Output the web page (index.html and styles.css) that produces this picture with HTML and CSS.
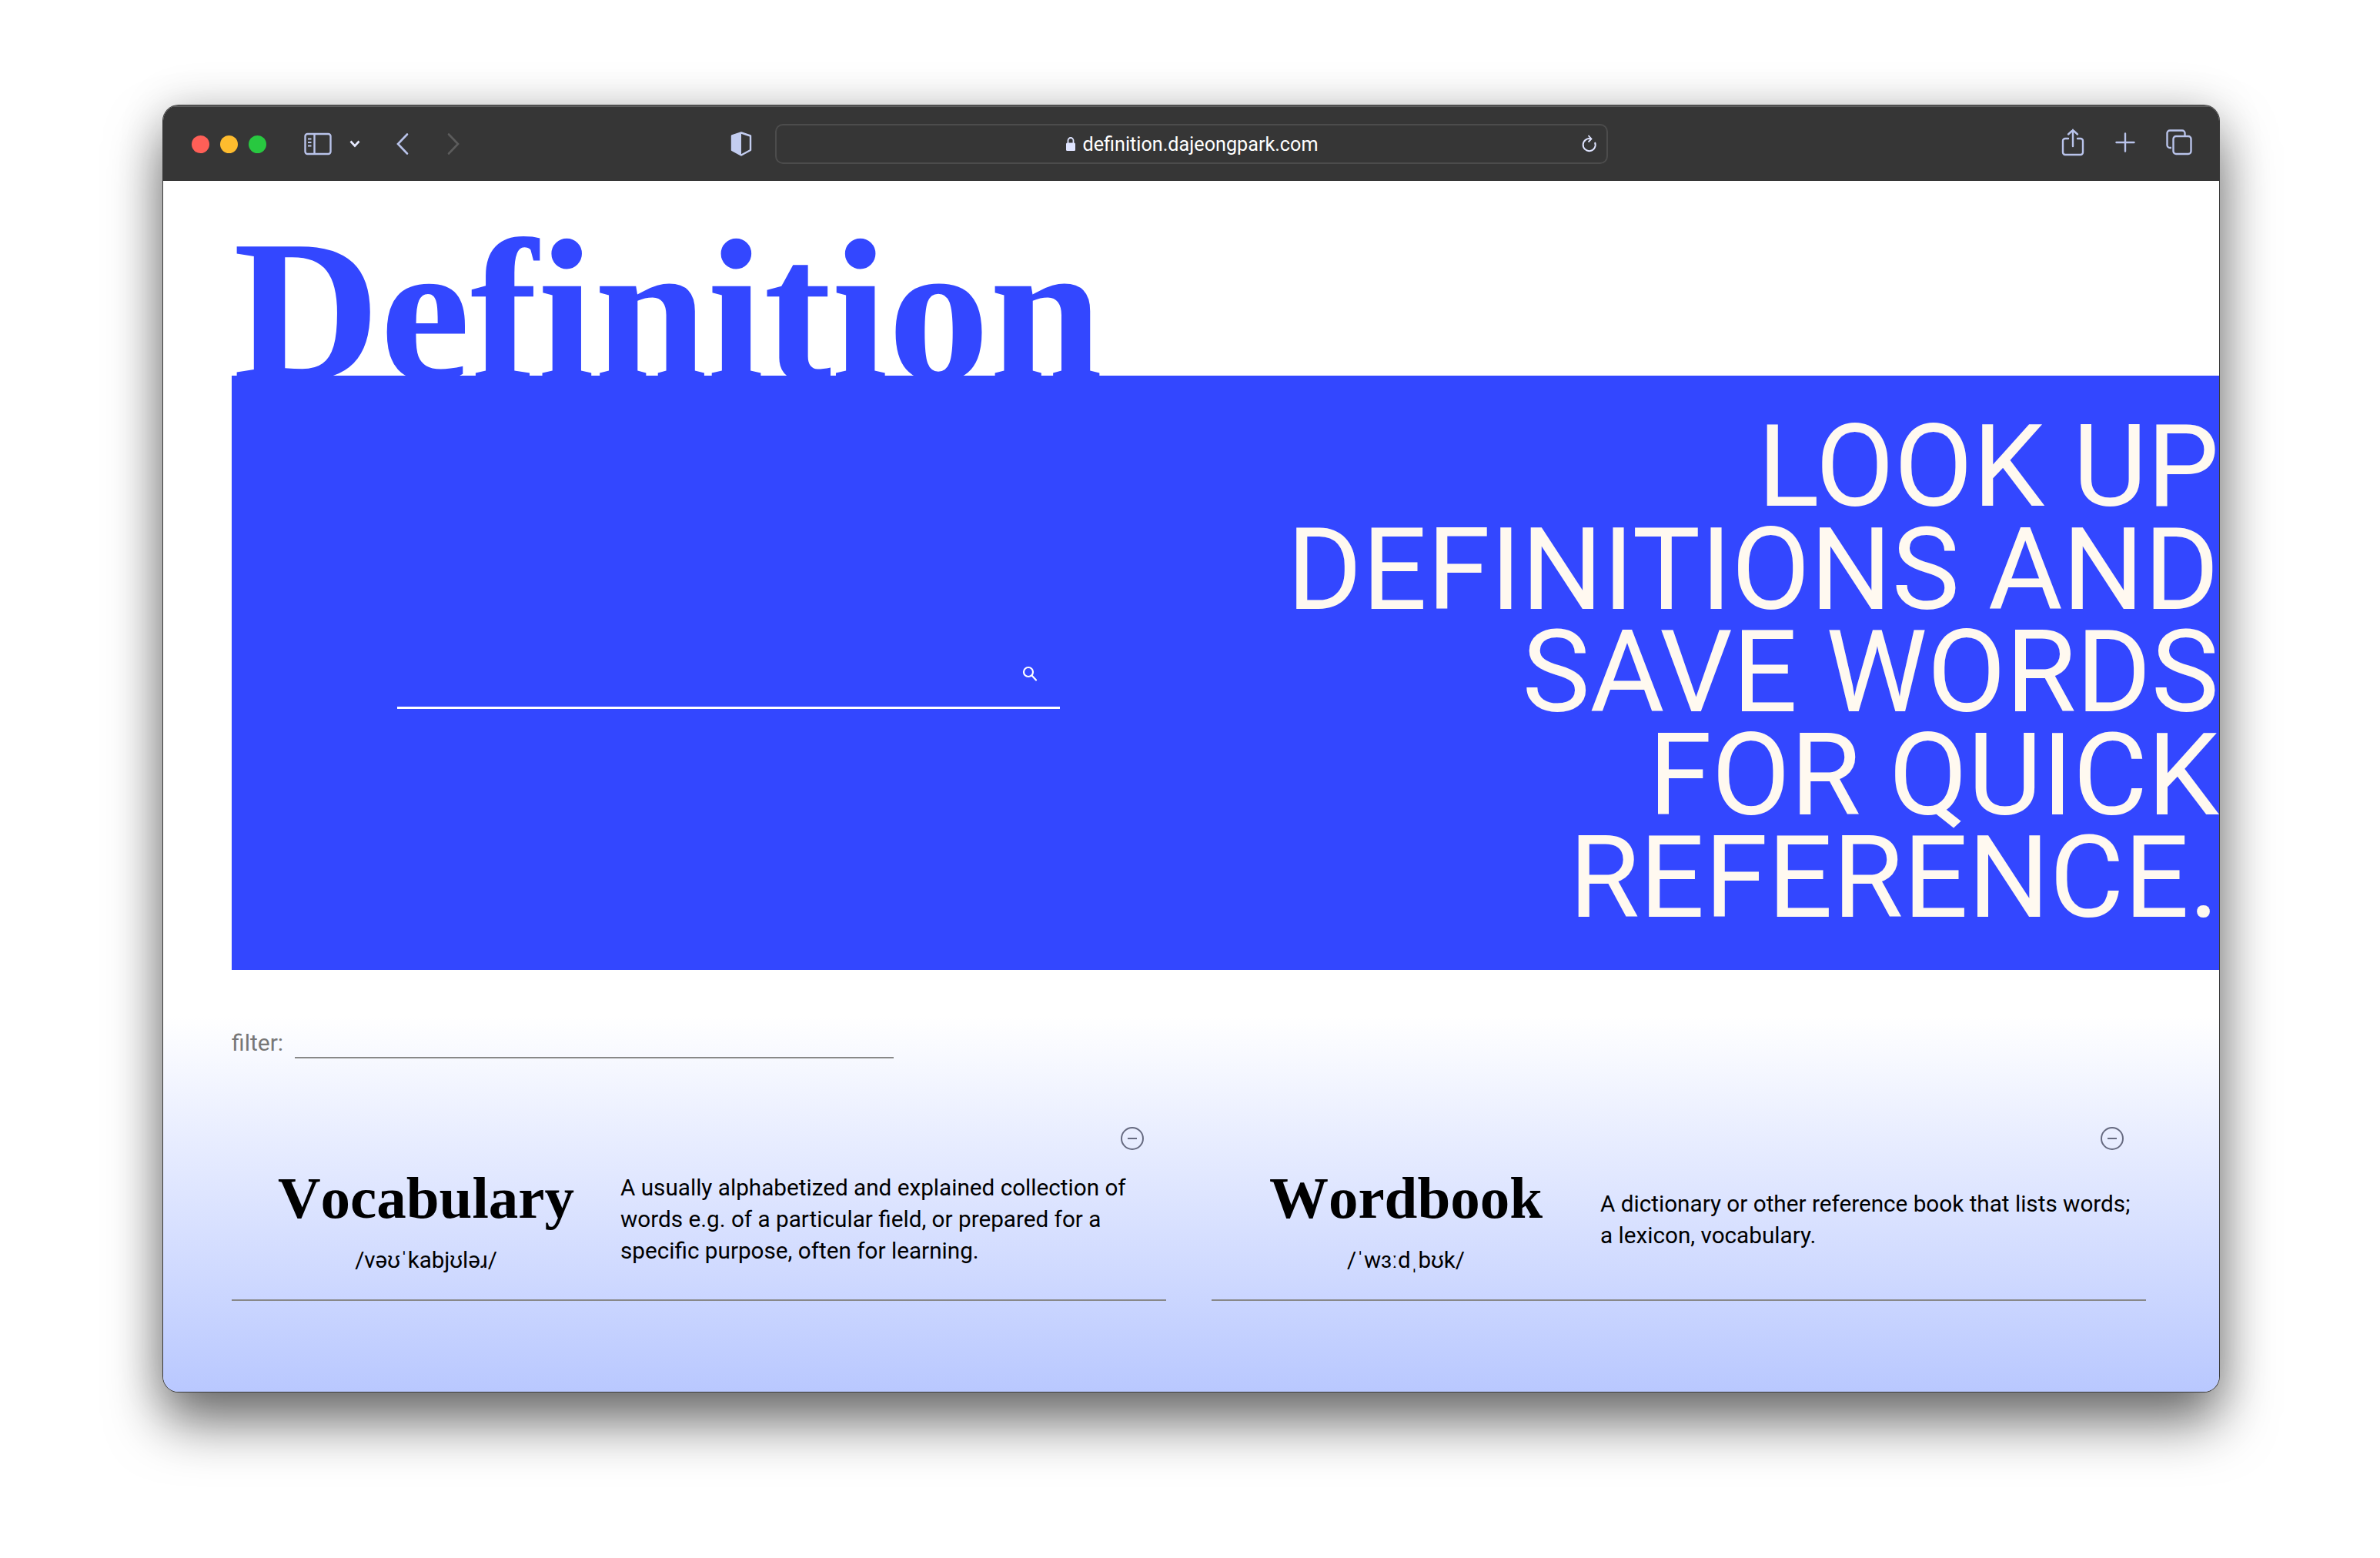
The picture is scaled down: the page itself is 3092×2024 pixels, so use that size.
FILE: index.html
```html
<!DOCTYPE html>
<html lang="en">
<head>
  <meta charset="UTF-8">
  <title>Definition</title>
  <link rel="stylesheet" href="styles.css">
</head>
<body>
  <div class="window">
    <!-- Browser toolbar -->
    <header class="toolbar">
      <div class="lights">
        <span class="light red"></span>
        <span class="light yellow"></span>
        <span class="light green"></span>
      </div>
      <svg class="icon sidebar-icon" width="36" height="30" viewBox="0 0 36 30" fill="none" stroke="#b9c3ea" stroke-width="2.4">
        <rect x="1.5" y="2" width="33" height="26" rx="3"/>
        <path d="M13.5 2v26"/>
        <path d="M5 8.500h4.500M5 13h4.500M5 17.500h4.500" stroke-width="2"/>
      </svg>
      <svg class="icon chevron-icon" width="16" height="12" viewBox="0 0 16 12" fill="none" stroke="#e6eaff" stroke-width="2.600">
        <path d="M2.500 2.500L8 8.500l5.500-6"/>
      </svg>
      <svg class="icon back-icon" width="20" height="30" viewBox="0 0 20 30" fill="none" stroke="#b9c3ea" stroke-width="2.600" stroke-linecap="round">
        <path d="M16 2.500L4 15l12 12.500"/>
      </svg>
      <svg class="icon forward-icon" width="20" height="30" viewBox="0 0 20 30" fill="none" stroke="#5c5c5c" stroke-width="2.600" stroke-linecap="round">
        <path d="M4 2.500L16 15 4 27.500"/>
      </svg>
      <svg class="icon shield-icon" width="28" height="32" viewBox="0 0 28 32">
        <path d="M14 1.500L26 5.500V24L14 30.500 2 24V5.500z" fill="none" stroke="#c3cdf0" stroke-width="2.400" stroke-linejoin="round"/>
        <path d="M14 1.500V30.500L2 24V5.500z" fill="#c3cdf0"/>
      </svg>
      <div class="address">
        <svg class="lock" width="14" height="20" viewBox="0 0 14 20">
          <path d="M3.500 9V5.500a3.500 3.500 0 0 1 7 0V9" fill="none" stroke="#dfe4ff" stroke-width="1.800"/>
          <rect x="1" y="8.500" width="12" height="10.500" rx="1.500" fill="#dfe4ff"/>
        </svg>
        <span class="url">definition.dajeongpark.com</span>
        <svg class="reload" width="22" height="26" viewBox="0 0 22 26" fill="none" stroke="#dfe4ff" stroke-width="2">
          <path d="M14 6.500a8 8 0 1 0 5 4.500"/>
          <path d="M10.500 2l4 4.500-4 4" stroke-width="1.800"/>
        </svg>
      </div>
      <div class="tools">
        <svg width="30" height="36" viewBox="0 0 30 36" fill="none" stroke="#b9c3ea" stroke-width="2.400" stroke-linecap="round">
          <path d="M9 13H5a3 3 0 0 0-3 3v15a3 3 0 0 0 3 3h20a3 3 0 0 0 3-3V16a3 3 0 0 0-3-3h-4"/>
          <path d="M15 23V2M9 7.500L15 2l6 5.500"/>
        </svg>
        <svg width="26" height="26" viewBox="0 0 26 26" fill="none" stroke="#b9c3ea" stroke-width="2.400" stroke-linecap="round">
          <path d="M13 1.500v23M1.500 13h23"/>
        </svg>
        <svg width="34" height="34" viewBox="0 0 34 34" fill="none" stroke="#b9c3ea" stroke-width="2.400">
          <path d="M7 24H5a3.500 3.500 0 0 1-3.500-3.500V5A3.500 3.500 0 0 1 5 1.500h16A3.500 3.500 0 0 1 24.500 5v3"/>
          <rect x="9.500" y="9" width="23" height="23" rx="3.500"/>
        </svg>
      </div>
    </header>

    <main class="page">
      <h1 class="logo">Definition</h1>

      <section class="hero">
        <form class="search">
          <svg class="search-icon" width="20" height="20" viewBox="0 0 20 20" fill="none" stroke="#fff" stroke-width="2.200" stroke-linecap="round">
            <circle cx="8" cy="8" r="6"/>
            <path d="M12.500 12.500l5.500 6"/>
          </svg>
        </form>
        <h2 class="tagline">Look up<br>definitions and<br>save words<br>for quick<br>reference.</h2>
      </section>

      <div class="filter">
        <label class="filter-label">filter:</label>
        <span class="filter-line"></span>
      </div>

      <!-- Saved words -->
      <section class="words">
        <article class="word-card">
          <svg class="remove" width="32" height="32" viewBox="0 0 32 32" fill="none" stroke="#666a80" stroke-width="2">
            <circle cx="16" cy="16" r="14"/>
            <path d="M10 16h12"/>
          </svg>
          <div class="word-body">
            <div class="word-head">
              <h3 class="word">Vocabulary</h3>
              <p class="phonetic">/vəʊˈkabjʊləɹ/</p>
            </div>
            <p class="meaning">A usually alphabetized and explained collection of words e.g. of a particular field, or prepared for a specific purpose, often for learning.</p>
          </div>
        </article>
        <article class="word-card">
          <svg class="remove" width="32" height="32" viewBox="0 0 32 32" fill="none" stroke="#666a80" stroke-width="2">
            <circle cx="16" cy="16" r="14"/>
            <path d="M10 16h12"/>
          </svg>
          <div class="word-body">
            <div class="word-head">
              <h3 class="word">Wordbook</h3>
              <p class="phonetic">/ˈwɜːdˌbʊk/</p>
            </div>
            <p class="meaning">A dictionary or other reference book that lists words; a lexicon, vocabulary.</p>
          </div>
        </article>
      </section>
    </main>
  </div>
</body>
</html>
```

FILE: styles.css
```css
/* General styles */
* {
  box-sizing: border-box;
}

body {
  margin: 0;
  min-height: 100vh;
  padding: 137px 209px 0 212px;
  background-color: #fff;
  font-family: Roboto, sans-serif;
}

.window {
  width: 2671px;
  height: 1671px;
  border-radius: 20px;
  overflow: hidden;
  box-shadow: 0 0 0 1px #3a3a3a, 0 40px 70px rgba(0, 0, 0, 0.55), 0 0 60px rgba(0, 0, 0, 0.16);
  display: flex;
  flex-direction: column;
}

/* Toolbar */
.toolbar {
  height: 98px;
  flex-shrink: 0;
  background-color: #363636;
  border-top: 2px solid #5e5e5e;
  display: flex;
  align-items: center;
  padding-left: 37px;
}

.lights {
  display: flex;
  gap: 14px;
  margin-right: 49px;
}

.light {
  width: 23px;
  height: 23px;
  border-radius: 50%;
}

.red { background-color: #ff5f57; }
.yellow { background-color: #febc2e; }
.green { background-color: #28c840; }

.chevron-icon { margin-left: 22px; }
.back-icon { margin-left: 44px; }
.forward-icon { margin-left: 46px; }
.shield-icon { margin-left: 350px; }

.address {
  width: 1082px;
  height: 52px;
  margin-left: 30px;
  border: 2px solid #4c4c4c;
  border-radius: 10px;
  display: flex;
  align-items: center;
  justify-content: center;
  gap: 9px;
  position: relative;
}

.url {
  color: #fff;
  font-size: 25.200px;
}

.reload {
  position: absolute;
  right: 12px;
  top: 11px;
}

.tools {
  margin-left: auto;
  margin-right: 35px;
  padding-bottom: 4px;
  display: flex;
  align-items: center;
  gap: 40px;
}

/* Page */
.page {
  flex: 1;
  padding-left: 89px;
  background: linear-gradient(to bottom, #fff 0, #fff 1085px, #b9c8ff 100%);
}

.logo {
  height: 253px;
  margin: 0;
  padding-left: 2px;
  color: #3347ff;
  font-family: "Liberation Serif", serif;
  font-size: 264px;
  font-weight: 700;
  line-height: 339px;
}

.hero {
  height: 772px;
  position: relative;
  background-color: #3347ff;
  display: flex;
  justify-content: space-between;
  align-items: flex-start;
}

.search {
  width: 861px;
  height: 61px;
  margin: 372px 0 0 215px;
  border-bottom: 3px solid #fff;
  display: flex;
  justify-content: flex-end;
  padding: 5px 29px 0 0;
}

.tagline {
  margin: 52px 0 0;
  color: #fff9f0;
  font-size: 148.500px;
  font-weight: 400;
  line-height: 133.500px;
  text-align: right;
  text-transform: uppercase;
  white-space: nowrap;
}

.filter {
  display: flex;
  align-items: flex-end;
  gap: 15px;
  margin-top: 75px;
}

.filter-label {
  color: #777;
  font-size: 30px;
  line-height: 40px;
}

.filter-line {
  width: 778px;
  border-bottom: 2px solid #888;
}

/* Word cards */
.words {
  display: flex;
  gap: 59px;
  margin-top: 88px;
}

.word-card {
  width: 1214px;
  height: 227px;
  border-bottom: 2px solid #888;
  position: relative;
}

.remove {
  position: absolute;
  top: 0;
  right: 28px;
}

.word-body {
  height: 100%;
  padding-top: 16px;
  display: flex;
  align-items: center;
}

.word-head {
  width: 505px;
  text-align: center;
}

.word {
  margin: 0;
  color: #000;
  font-family: "Liberation Serif", serif;
  font-size: 77px;
  font-weight: 700;
  font-kerning: none;
  line-height: 90px;
}

.phonetic {
  margin: 16px 0 0;
  color: #000;
  font-size: 29.500px;
  line-height: 40px;
}

.meaning {
  width: 700px;
  margin: 0;
  color: #000;
  font-size: 29.700px;
  line-height: 41px;
}
```
